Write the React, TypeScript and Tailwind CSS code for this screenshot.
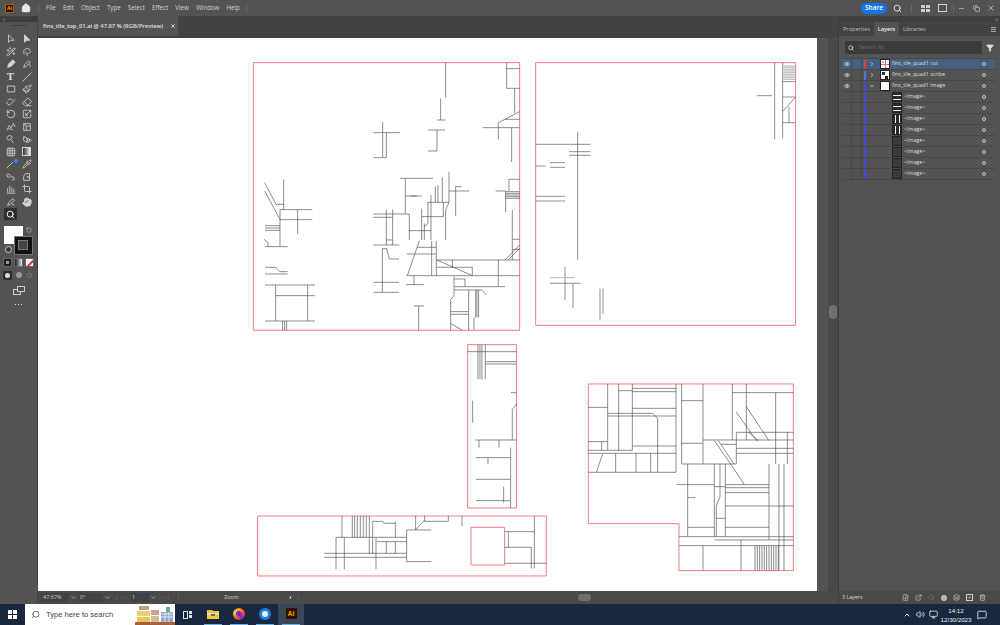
import React from "react";
import { Wand2, Paintbrush, Eraser, RotateCcw, Scaling, Pipette, Hand, Search, Grid3x3, Slash, Crop, ChevronRight, ChevronDown, X, Minus, Eye, Filter, Volume2, Monitor, ChevronUp, MessageSquare, Trash2, Plus, Copy, ExternalLink, FilePlus, Layers, Home } from "lucide-react";

const P1 = "M587 8V113 M572 115V180 M561 180H587 M534 210H585 M561 210V273 M534 273H561 M370 218H450 M398 186V293 M409 218V293 M370 293H409 M770 8V85H809 M770 26H809 M794 85V160 M809 155L765 178L745 188V238 M765 178H809 M698 203H809 M785 203V306 M450 355H549 M466 355V462 M370 462H478 M370 472H428 M409 448V555 M428 448V555 M409 540H428 M370 555H448 M478 462V540 M476 512H543 M482 408H515 M466 408H500 M597 335V427L587 450V540 M577 352V427 M564 375V427 M556 380V427 M534 427H597 M534 427V470 M543 405V540 M515 446V540 M523 490V540 M534 470V490L523 500 M515 470H580 M580 427V470 M597 393H657 M617 380V468 M617 380H635 M737 393H767 M767 393V456 M777 358V393 M777 358H809 M767 395H809 M767 400H809 M767 405H809 M767 410H809 M767 415H809 M787 450V600 M787 538H809 M787 568H809 M809 555L765 600 M775 600L809 565 M44 368L78 433H101 M44 393L90 478 M101 358V449 M90 449H187 M90 449V560 M45 560H113 M90 479H187 M143 449V522 M45 497H90 M45 504H90 M45 511H90 M42 538L54 548V560 M45 622H76L90 635H113 M45 642H113 M45 675H195 M45 783H195 M77 675V783 M173 675V783 M77 707H195 M98 783V811 M104 783V811 M110 783V811 M397 566V697 M370 667H447 M370 697H447 M397 566H410L418 597H447 M470 582H558 M502 562H558 M508 543L472 647 M470 647H809 M545 543V647 M559 543V647 M559 600H809 M561 600L667 647 M607 600V622 M667 622V647 M561 622H667 M745 600V680 M492 647V675 M468 674H522 M612 650V680 M645 657V680 M612 657H645 M612 680H765 M612 690H695L710 705 M612 680V708L602 718V811 M602 755H656 M602 763H656 M656 690V811 M672 772V811 M677 690V772 M681 690V772 M686 690V772 M602 790L637 811 M492 738H522 M506 738V811";
const P2 = "M734 8V238 M758 8V236 M758 65H797 M758 111H797 M797 111L758 154 M758 188H797 M777 140V188 M681 107H726 M17 253H182 M143 216V600 M117 275H182 M117 286H182 M60 308H105 M60 322H105 M17 318H47 M17 409H105 M17 423H105 M105 621V721 M60 670H152 M129 670V745 M210 686V779 M219 686V761";
const P2soft = "M60 653H135 M760 18H797 M760 23H797 M760 28H797 M760 33H797 M760 38H797 M760 43H797 M760 48H797 M760 53H797 M760 58H797";
const P3hatch = [510, 517, 524, 531, 538, 545, 552, 559, 566, 573, 580].map((x) => `M${x} 497V572`).join(" ");
const P3 = "M68 12V211 M101 12V211 M142 12V211 M101 32H142 M142 25H273 M142 35H273 M273 12V277 M10 82H68 M68 100H203L218 115V277 M142 85H273 M68 108H273 M10 185H68 M50 185V211 M10 211H142 M10 220H273 M142 198H273 M10 277H273 M53 222L34 277 M92 220V277 M153 220V277 M197 220V277 M290 12V252H454 M354 12V252 M290 62H354 M290 190H354 M354 180H454 M442 12V180 M484 12V180 M442 38H625 M572 38V252 M607 155V252 M454 157H625 M454 157V252 M454 180H625 M454 205H625 M454 220H625 M453 95L515 182 M484 80L552 182 M490 157L520 182 M388 182L437 252 M400 182L447 252 M437 252L478 314 M408 193H454 M308 252V470 M388 252V470 M405 252V350L394 378V470 M421 252V470 M552 252V480 M582 252V572 M597 252V572 M275 314H388 M388 320H421 M421 314H552 M421 323H552 M421 338H552 M421 378H625 M308 353H331 M394 415H421 M308 442H388 M421 442H552 M282 470H625 M388 480H625 M282 497H625 M354 497V572 M468 480V572 " + P3hatch;
const P4 = "M653 35H800 M684 14V118 M690 14V118 M696 14V118 M706 14V118 M706 65H800 M706 72H800 M668 182V248 M800 192L787 208V300 M783 158H800 M675 300H800 M687 300V323 M747 300V323 M782 323V504 M678 353H782 M714 353V373 M678 418H782 M678 482H782 M761 440V488 M276 528V592 M307 528V592 M314 528V592 M322 528V592 M331 528V592 M340 528V592 M349 528V592 M358 528V592 M258 592H380 M258 592V688 M283 592V688 M358 592V642 M368 544V642 M378 592V688 M223 640H470 M223 652H470 M368 544H398L402 550H436 M436 544V592 M380 592H470 M380 605H470 M409 605V640 M436 605V640 M470 570V665 M470 570H544 M470 665H544 M497 528V570 M497 570L524 540 M524 528V544H595 M595 528V544 M636 528V558 M764 575H853 M775 575V622 M764 622H844 M844 622V686 M853 528V686 M764 670H889";

function Artboard() {
  return (
    <svg viewBox="38 38 779 553" className="block w-[779px] h-[553px] bg-white shrink-0">
      <g fill="none" strokeLinejoin="miter">
        <g transform="translate(250 60) scale(0.3333)">
          <path d="M10 8H809V811H10Z" stroke="#f47c7c" strokeWidth="3" />
          <path d={P1} stroke="#4a4a4a" strokeWidth="1.9" />
        </g>
        <g transform="translate(530 60) scale(0.3333)">
          <path d="M17 8H797V796H17Z" stroke="#f47c7c" strokeWidth="3" />
          <path d={P2} stroke="#666" strokeWidth="2.2" />
          <path d={P2soft} stroke="#aaa" strokeWidth={2.6} />
        </g>
        <g transform="translate(585 380) scale(0.3333)">
          <path d="M10 12H625V572H282V431H10Z" stroke="#f47c7c" strokeWidth="3" />
          <path d={P3} stroke="#4a4a4a" strokeWidth="1.9" />
        </g>
        <g transform="translate(250 340) scale(0.3333)">
          <path d="M653 14H800V504H653Z M23 528H889V708H23Z M663 562H764V675H663Z" stroke="#f47c7c" strokeWidth="3" />
          <path d={P4} stroke="#4a4a4a" strokeWidth="1.9" />
        </g>
      </g>
    </svg>
  );
}

const ic = "w-[10px] h-[10px] text-[#d4d4d4]";
function G({ d, fill = false }: { d: string; fill?: boolean }) {
  return (
    <svg viewBox="0 0 12 12" className="w-[10px] h-[10px]" fill={fill ? "#d4d4d4" : "none"} stroke="#d4d4d4" strokeWidth="1">
      <path d={d} />
    </svg>
  );
}
const tools: React.ReactNode[] = [
  <G d="M3 1L3 10L5.5 7.5H9.5Z" />,
  <G d="M3 1L3 10L5.5 7.5H9.5Z" fill />,
  <Wand2 className={ic} />,
  <G d="M3 9C1 6 2 2 6 2S11 5 9 7S4 7 4 5M5 8L7 11" />,
  <G d="M2 10L3 6L8 1L11 4L6 9Z" fill />,
  <G d="M2 10L3 7L8 2L10 4L5 9ZM8 6C10 7 11 9 9 10" />,
  <span className="text-[11px] leading-none font-bold text-[#dcdcdc] font-['Liberation_Serif',serif]">T</span>,
  <Slash className={ic} />,
  <G d="M1.5 2.5H10.5V9.5H1.5Z" />,
  <Paintbrush className={ic} />,
  <G d="M1 6C1 9 4 10 5 9L11 3M2 4C3 2 7 2 8 4" />,
  <Eraser className={ic} />,
  <RotateCcw className={ic} />,
  <Scaling className={ic} />,
  <G d="M1 10L4 4L6 7L9 2L11 6M3 8L8 9" />,
  <G d="M2 2H10V10H2ZM2 2L5 5H10M5 5V10" />,
  <G d="M1 5C1 2 6 1 7 3C8 5 6 7 4 7C2 7 1 6 1 5ZM6 7L9 11" />,
  <G d="M2 3L6 5V10L2 8ZM7 5L9 6V9L7 10ZM10 6L11 7V8L10 9" />,
  <Grid3x3 className={ic} />,
  <span className="block w-[9px] h-[9px] border border-[#d4d4d4] bg-gradient-to-r from-[#333] to-[#eee]" />,
  <span className="relative block w-[10px] h-[10px]"><svg viewBox="0 0 12 12" className="w-[10px] h-[10px]" stroke="#d4d4d4" fill="none"><path d="M1 11L8 4" /></svg><span className="absolute right-[-2px] top-0 w-[4px] h-[4px] rounded-full bg-[#2f8fff]" /></span>,
  <Pipette className={ic} />,
  <G d="M1 4C1 2 4 2 5 4S3 7 2 6ZM6 6C7 5 10 6 10 8S8 10 7 9" />,
  <G d="M4 2H9V10H2V5ZM6 5L8 7M8 5L6 7" />,
  <G d="M2 10V5M4.5 10V2M7 10V4M9.5 10V6M1 11H11" />,
  <Crop className={ic} />,
  <G d="M2 10L3 7L8 2L10 4L5 9ZM7 8L10 10" />,
  <Hand className={ic + " fill-[#d4d4d4]"} />,
];

function Toolbar() {
  return (
    <aside className="w-[38px] bg-[#535353] flex flex-col items-center border-r border-[#454545]">
      <div className="w-full h-[6px] bg-[#3e3e3e] flex items-center px-[3px]">
        <span className="text-[5px] leading-none text-[#aaa]">»</span>
      </div>
      <div className="w-[14px] h-px bg-[#3e3e3e] mt-[3px]" />
      <div className="grid grid-cols-[16px_16px] auto-rows-[12.5px] mt-[7px] justify-center justify-items-center items-center">
        {tools.map((t, i) => (
          <div key={i} className="relative flex items-center justify-center w-[13px] h-[12px]">{t}</div>
        ))}
        <div className="w-[13px] h-[12px] bg-[#2f2f2f] flex items-center justify-center rounded-[1px]">
          <Search className="w-[9px] h-[9px] text-white" strokeWidth={2.5} />
        </div>
      </div>
      <div className="relative w-[30px] h-[31px] mt-[5px] shrink-0">
        <div className="absolute left-0 top-0 w-[19px] h-[18px] bg-white" />
        <div className="absolute left-[10px] top-[10px] w-[19px] h-[19px] bg-[#111] border border-[#777] flex items-center justify-center">
          <div className="w-[10px] h-[10px] border-[1px] border-[#777] bg-[#444]" />
        </div>
        <div className="absolute left-[22px] top-[1px] text-[#ccc]"><RotateCcw className="w-[6px] h-[6px]" /></div>
        <div className="absolute left-[1px] top-[20px] w-[7px] h-[7px] rounded-full border border-[#ccc] bg-[#333]" />
      </div>
      <div className="flex gap-[2px] mt-[1px]">
        <span className="w-[9px] h-[9px] bg-[#222] border border-[#666] flex items-center justify-center"><span className="block w-[3px] h-[3px] bg-[#999]" /></span>
        <span className="w-[9px] h-[9px] bg-gradient-to-r from-[#222] to-[#eee] border border-[#666]" />
        <span className="w-[9px] h-[9px] bg-white border border-[#666] relative overflow-hidden"><span className="absolute left-[-2px] top-[3px] w-[14px] h-[2px] bg-[#e03030] -rotate-45" /></span>
      </div>
      <div className="flex gap-[2px] mt-[4px]">
        <span className="w-[9px] h-[9px] bg-[#2e2e2e] rounded-[1px] flex items-center justify-center"><span className="block w-[5px] h-[5px] rounded-full bg-[#ddd]" /></span>
        <span className="w-[9px] h-[9px] flex items-center justify-center"><span className="block w-[6px] h-[6px] rounded-full bg-[#999]" /></span>
        <span className="w-[9px] h-[9px] flex items-center justify-center"><span className="block w-[5px] h-[5px] rounded-full border border-[#777]" /></span>
      </div>
      <div className="relative w-[12px] h-[9px] mt-[6px]">
        <span className="absolute left-0 top-[3px] w-[8px] h-[6px] border border-[#ccc]" />
        <span className="absolute left-[4px] top-0 w-[8px] h-[6px] border border-[#ccc] bg-[#535353]" />
      </div>
      <div className="flex gap-[1.5px] mt-[9px]">
        <span className="w-[1.5px] h-[1.5px] bg-[#ddd]" />
        <span className="w-[1.5px] h-[1.5px] bg-[#ddd]" />
        <span className="w-[1.5px] h-[1.5px] bg-[#ddd]" />
      </div>
    </aside>
  );
}

function MenuBar() {
  const items = ["File", "Edit", "Object", "Type", "Select", "Effect", "View", "Window", "Help"];
  return (
    <header className="h-4 bg-[#535353] flex items-center shrink-0 text-[#d2d2d2] text-[6.2px]">
      <div className="w-[9px] h-[9px] ml-[5px] rounded-[1px] bg-[#2e0f00] border border-[#ff9a00]/60 flex items-center justify-center text-[5px] font-bold text-[#ff9a00] leading-none">Ai</div>
      <Home className="w-[10px] h-[10px] ml-[7px] text-[#e8e8e8] fill-[#e8e8e8]" />
      <span className="w-px h-[9px] bg-[#666] ml-[7px]" />
      <nav className="flex gap-[7.1px] ml-[7px]">
        {items.map((m) => <span key={m}>{m}</span>)}
      </nav>
      <span className="w-px h-[9px] bg-[#666] ml-[6px]" />
      <div className="ml-auto flex items-center">
        <span className="w-[26px] h-[11px] rounded-full bg-[#1473e6] text-white text-[6.5px] flex items-center justify-center font-semibold">Share</span>
        <Search className="w-[9px] h-[9px] ml-[6px] text-[#e0e0e0]" strokeWidth={2.5} />
        <span className="w-px h-[9px] bg-[#666] ml-[9px]" />
        <span className="w-[9px] h-[7px] ml-[9px] grid grid-cols-2 gap-px"><i className="bg-[#ccc]" /><i className="bg-[#ccc]" /><i className="bg-[#ccc]" /><i className="bg-[#ccc]" /></span>
        <span className="w-[9px] h-[8px] ml-[8px] border border-[#ccc]" />
        <span className="w-px h-[9px] bg-[#666] ml-[6px]" />
        <Minus className="w-[7px] h-[7px] ml-[4px] text-[#ddd]" />
        <Copy className="w-[7px] h-[7px] ml-[8px] text-[#ddd]" />
        <X className="w-[8px] h-[8px] ml-[7px] mr-[5px] text-[#ddd]" />
      </div>
    </header>
  );
}

function Center() {
  return (
    <main className="flex-1 flex flex-col min-w-0">
      <div className="h-[22px] shrink-0 flex bg-[#434343]">
        <div className="w-[140px] mb-[2px] ml-0 bg-[#535353] flex items-center pl-[5px] text-[#e0e0e0] text-[5.8px] font-semibold whitespace-nowrap">
          fins_tile_top_01.ai @ 47.07 % (RGB/Preview)
          <X className="w-[6px] h-[6px] ml-[7px] text-[#eee]" strokeWidth={3} />
        </div>
      </div>
      <div className="h-[553px] flex shrink-0">
        <Artboard />
        <div className="flex-1 bg-[#535353] flex justify-end">
          <div className="w-[10px] bg-[#4a4a4a] flex flex-col justify-center pb-[6px]">
            <div className="w-[8px] h-[14px] mx-auto rounded-full bg-[#6f6f6f]" />
          </div>
        </div>
      </div>
      <div className="h-[13px] bg-[#4a4a4a] flex items-center text-[#cfcfcf] text-[5.5px] pl-[3px]">
        <span className="w-[27px] h-[9px] bg-[#424242] pl-[2px] leading-[9px]">47.67%</span>
        <ChevronDown className="w-[7px] h-[7px] ml-[2px]" />
        <span className="w-[24px] h-[9px] bg-[#424242] pl-[1px] ml-[2px] leading-[9px]">0°</span>
        <ChevronDown className="w-[7px] h-[7px] ml-[1px]" />
        <span className="text-[#777] ml-[4px] tracking-[2px] text-[6px]">|‹‹</span>
        <span className="w-[18px] h-[9px] bg-[#424242] pl-[1px] ml-[3px] leading-[9px]">1</span>
        <ChevronDown className="w-[7px] h-[7px] ml-[1px]" />
        <span className="text-[#777] ml-[2px] tracking-[2px] text-[6px]">››|</span>
        <span className="w-[106px] text-center ml-[6px] border-l border-[#5a5a5a]">Zoom</span>
        <ChevronRight className="w-[5px] h-[5px] ml-[4px] fill-white text-white" />
        <ChevronRight className="w-[5px] h-[5px] ml-[3px] rotate-180 text-[#888]" />
        <div className="flex-1 h-[9px] ml-[2px] relative">
          <div className="absolute left-[275px] top-[1px] w-[13px] h-[7px] rounded-full bg-[#6f6f6f]" />
        </div>
      </div>
    </main>
  );
}

type Row = { name: string; indent?: boolean; bar: string; chev?: "r" | "d"; eye?: boolean; sel?: boolean; thumb: React.ReactNode };
const T1 = <span className="block w-full h-full bg-white relative"><i className="absolute left-[4px] inset-y-0 w-px bg-[#f07070]" /><i className="absolute top-[4px] inset-x-0 w-full h-px bg-[#f07070]" /><i className="absolute top-[1px] left-[1px] w-[2px] h-[2px] bg-[#f8b0b0]" /></span>;
const T2 = <span className="block w-full h-full bg-white relative"><i className="absolute left-[1px] top-[1px] w-[3px] h-[3px] bg-[#333]" /><i className="absolute left-[4px] top-[5px] w-[3px] h-[4px] bg-[#222]" /></span>;
const Th = <span className="flex w-full h-full bg-[#2a2a2a] flex-col justify-center gap-[3px]"><i className="block h-px bg-[#eee]" /><i className="block h-px bg-[#eee]" /></span>;
const Tv = <span className="flex w-full h-full bg-[#2a2a2a] justify-center gap-[3px]"><i className="block w-px bg-[#eee]" /><i className="block w-px bg-[#eee]" /></span>;
const Td = <span className="block w-full h-full bg-[#3a3a3a]" />;
const rows: Row[] = [
  { name: "fins_tile_quad1 cut", bar: "#e23c3c", chev: "r", eye: true, sel: true, thumb: T1 },
  { name: "fins_tile_quad1 scribe", bar: "#3d7de0", chev: "r", eye: true, thumb: T2 },
  { name: "fins_tile_quad1 image", bar: "#4646e0", chev: "d", eye: true, thumb: <span className="block w-full h-full bg-white" /> },
  { name: "<Image>", indent: true, bar: "#4646e0", thumb: Th },
  { name: "<Image>", indent: true, bar: "#4646e0", thumb: Th },
  { name: "<Image>", indent: true, bar: "#4646e0", thumb: Tv },
  { name: "<Image>", indent: true, bar: "#4646e0", thumb: Tv },
  { name: "<Image>", indent: true, bar: "#4646e0", thumb: Td },
  { name: "<Image>", indent: true, bar: "#4646e0", thumb: Td },
  { name: "<Image>", indent: true, bar: "#4646e0", thumb: Td },
  { name: "<Image>", indent: true, bar: "#4646e0", thumb: Td },
];

function LayerRow({ r }: { r: Row }) {
  return (
    <div className={`h-[11px] flex items-center border-b border-[#474747] text-[5.3px] text-[#dcdcdc] ${r.sel ? "bg-[#46617f]" : ""}`}>
      <div className="w-[10px] h-full flex items-center justify-center border-r border-[#474747]">
        {r.eye && <Eye className="w-[6px] h-[6px] text-[#ddd]" strokeWidth={2.5} />}
      </div>
      <div className="w-[10px] h-full border-r border-[#474747]" />
      <span className="block w-[2px] h-[9px] ml-[2px]" style={{ backgroundColor: r.bar }} />
      <div className="w-[12px] flex justify-center ml-[0px]">
        {r.chev === "r" && <ChevronRight className="w-[6px] h-[6px]" strokeWidth={3} />}
        {r.chev === "d" && <ChevronDown className="w-[6px] h-[6px]" strokeWidth={3} />}
      </div>
      <span className={`block w-[10px] h-[10px] border border-[#222] shrink-0 overflow-hidden ${r.indent ? "ml-[14px]" : "ml-[2px]"}`}>{r.thumb}</span>
      <span className="ml-[2px] whitespace-nowrap">{r.name}</span>
      <span className="ml-auto mr-[9px] w-[4px] h-[4px] rounded-full border border-[#ccc]" />
    </div>
  );
}

function RightPanel() {
  return (
    <aside className="w-[162px] bg-[#535353] flex flex-col border-l border-[#3e3e3e]">
      <div className="h-[6px] bg-[#3e3e3e] flex justify-end items-center pr-[2px]">
        <span className="text-[5px] leading-none text-[#bbb]">»</span>
      </div>
      <div className="h-[14px] bg-[#434343] flex text-[5.6px] text-[#bdbdbd] items-stretch">
        <span className="pl-[4px] w-[35px] flex items-center">Properties</span>
        <span className="w-[25px] bg-[#535353] text-[#f0f0f0] font-semibold flex items-center justify-center">Layers</span>
        <span className="pl-[4px] w-[30px] flex items-center">Libraries</span>
        <span className="ml-auto mr-[4px] self-center flex flex-col gap-px w-[5px]"><i className="block h-px bg-[#aaa]" /><i className="block h-px bg-[#aaa]" /><i className="block h-px bg-[#aaa]" /></span>
      </div>
      <div className="flex items-center h-[13px] mt-[5px] ml-[6px] shrink-0">
        <div className="w-[137px] h-full bg-[#3b3b3b] rounded-[1px] flex items-center pl-[3px] text-[5.5px] text-[#6a6a6a]">
          <Search className="w-[6px] h-[6px] text-[#ddd] mr-[5px]" strokeWidth={3} />
          Search All
        </div>
        <Filter className="w-[8px] h-[8px] ml-[4px] text-[#ddd] fill-[#ddd]" />
      </div>
      <div className="mt-[4px] ml-[3px] mr-[5px] border-t border-[#474747]">
        {rows.map((r, i) => <LayerRow key={i} r={r} />)}
      </div>
      <div className="flex-1" />
      <div className="h-[13px] bg-[#4a4a4a] flex items-center text-[5.3px] text-[#d8d8d8] pl-[3px]">
        <span>3 Layers</span>
        <div className="ml-auto mr-[14px] flex gap-[6px] items-center text-[#cfcfcf]">
          <FilePlus className="w-[7px] h-[7px]" />
          <ExternalLink className="w-[7px] h-[7px]" />
          <Search className="w-[7px] h-[7px] text-[#777]" />
          <span className="w-[6px] h-[6px] rounded-full bg-[#bbb]" />
          <Layers className="w-[7px] h-[7px]" />
          <Plus className="w-[7px] h-[7px] border border-[#ccc]" />
          <Trash2 className="w-[7px] h-[7px]" />
        </div>
      </div>
    </aside>
  );
}

function Slot({ children, active = false }: { children: React.ReactNode; active?: boolean }) {
  return (
    <div className={`w-[26px] flex flex-col items-center ${active ? "bg-[#3a4657]" : ""}`}>
      <div className="flex-1 flex items-center justify-center">{children}</div>
      <span className="block w-[18px] h-[1.5px] bg-[#6fb0e0]" />
    </div>
  );
}

function Taskbar() {
  return (
    <footer className="h-[21px] bg-[#17283f] flex items-stretch shrink-0 font-['Liberation_Sans',sans-serif]">
      <div className="w-[25px] flex items-center justify-center">
        <span className="grid grid-cols-2 gap-[1px] w-[9px] h-[9px]"><i className="bg-white" /><i className="bg-white" /><i className="bg-white" /><i className="bg-white" /></span>
      </div>
      <div className="w-[150px] bg-white flex items-center relative text-[#444] text-[7.6px] pl-[6px]">
        <Search className="w-[9px] h-[9px] -scale-x-100 mr-[6px]" />
        Type here to search
        <svg viewBox="0 0 40 21" className="absolute right-0 top-0 w-[40px] h-[21px]">
          <rect x="0" y="18" width="40" height="3" fill="#a8623a" />
          <rect x="2" y="13" width="13" height="5" fill="#e8c65a" />
          <rect x="2" y="7" width="13" height="5" fill="#e9cf72" />
          <rect x="4" y="2" width="10" height="4" fill="#c89a7a" />
          <rect x="16" y="12" width="8" height="6" fill="#d8b9a0" />
          <rect x="16" y="6" width="8" height="5" fill="#c9a48a" />
          <rect x="26" y="8" width="12" height="10" fill="#8ea6c8" />
          <path d="M26 10H38M26 13H38M30 8V18M34 8V18" stroke="#dfe6f2" strokeWidth="1" />
          <rect x="31" y="3" width="4" height="5" fill="#5fae8c" />
        </svg>
      </div>
      <div className="w-[25px] flex items-center justify-center">
        <span className="flex gap-[1px] items-center"><span className="w-[5px] h-[8px] border border-[#ddd]" /><span className="flex flex-col gap-[1px]"><i className="block w-[3px] h-[3px] bg-[#ddd]" /><i className="block w-[3px] h-[3px] bg-[#ddd]" /></span></span>
      </div>
      <Slot>
        <svg viewBox="0 0 12 10" className="w-[12px] h-[10px]"><path d="M0 1H5L6 2H12V10H0Z" fill="#f6c344" /><rect x="0" y="4" width="12" height="2" fill="#ffe08a" /><rect x="4" y="5" width="4" height="2" fill="#2b78c4" /></svg>
      </Slot>
      <Slot>
        <span className="block w-[12px] h-[12px] rounded-full bg-[conic-gradient(#ff9a1f,#ff3d4d,#7a2ec4,#ff5a2d,#ffcf3d,#ff9a1f)] relative"><i className="absolute left-[3px] top-[3px] w-[5px] h-[5px] rounded-full bg-[#6a2bc0]" /></span>
      </Slot>
      <Slot>
        <span className="block w-[12px] h-[12px] rounded-full bg-[#1f7fd8] relative"><i className="absolute left-[3px] top-[3px] w-[6px] h-[6px] rounded-full bg-[#e6f2ff]" /></span>
      </Slot>
      <Slot active>
        <span className="w-[11px] h-[11px] rounded-[1px] bg-[#2e0f00] flex items-center justify-center text-[7px] font-bold text-[#ff9a00] leading-none">Ai</span>
      </Slot>
      <div className="ml-auto flex items-center text-[#eee]">
        <ChevronUp className="w-[8px] h-[8px] mr-[4.5px]" strokeWidth={3} />
        <Volume2 className="w-[9px] h-[9px] mr-[4px]" />
        <Monitor className="w-[9px] h-[9px] mr-[3px]" />
        <div className="flex flex-col items-center text-[6.2px] leading-[9px] mr-[5.5px]">
          <span>14:12</span>
          <span>12/30/2023</span>
        </div>
        <MessageSquare className="w-[10px] h-[10px] mr-[13px]" />
      </div>
    </footer>
  );
}

export default function App() {
  return (
    <div className="w-[1000px] h-[625px] flex flex-col overflow-hidden bg-[#535353] font-['Open_Sans',sans-serif]">
      <MenuBar />
      <div className="flex-1 flex min-h-0">
        <Toolbar />
        <Center />
        <RightPanel />
      </div>
      <Taskbar />
    </div>
  );
}
